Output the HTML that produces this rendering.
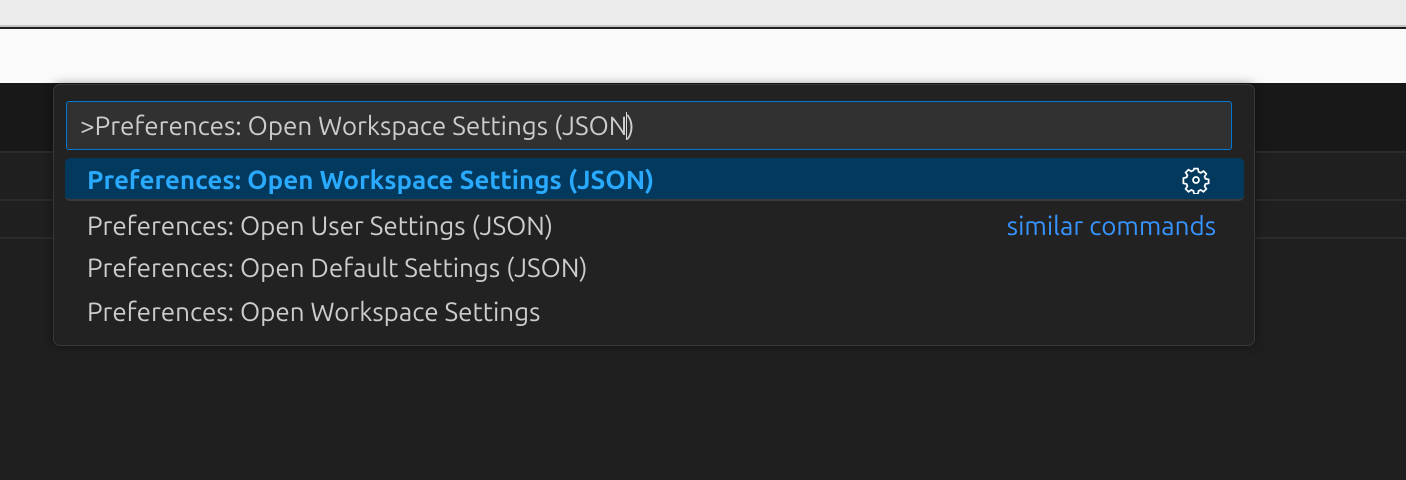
<!DOCTYPE html>
<html><head><meta charset="utf-8"><style>
*{margin:0;padding:0;box-sizing:border-box}
body{width:1406px;height:480px;overflow:hidden;background:#1f1f1f;font-family:"Ubuntu","Liberation Sans",sans-serif;position:relative}
.top{position:absolute;left:0;top:0;width:1406px;height:27px;background:#ebebeb;border-bottom:2px solid #c4c4c4}
.white{position:absolute;left:0;top:29px;width:1406px;height:54px;background:#fafafa}
.dk{position:absolute;left:0;top:83px;width:1406px;height:69px;background:#181818}
.ln{position:absolute;left:0;width:1406px;height:2px;background:#2b2b2b}
.w{position:absolute;left:53px;top:84px;width:1202px;height:262px;background:#222;border:1px solid #383838;border-radius:7px;box-shadow:0 0 10px rgba(0,0,0,.4)}
.inp{position:absolute;left:12px;top:16px;width:1166px;height:49px;background:#313131;border:1px solid #0078d4;border-radius:3px;color:#ccc;font-size:26px;line-height:47px;padding-left:13px}
.cur{display:inline-block;width:1px;height:28px;background:#ddd;vertical-align:-5px;margin:0 -1px}
.row{position:absolute;left:11px;width:1179px;height:43px;font-size:26px;line-height:43px;padding-left:22px;color:#ccc}
.sel{top:73px;background:#04395e;border-radius:5px;color:#2aaaff;font-weight:bold;border-bottom:2px solid #3a3a3a}
.sim{position:absolute;right:28px;top:0;color:#3794ff;font-weight:normal}
.gear{position:absolute;right:34px;top:8px}
</style></head><body>
<div class="top"></div><div class="white"></div><div class="dk"></div>
<div class="ln" style="top:151px"></div><div class="ln" style="top:199px"></div><div class="ln" style="top:237px"></div>
<div class="w">
<div class="inp">&gt;Preferences: Open Workspace Settings (JSON<span class="cur"></span>)</div>
<div class="row sel">Preferences: Open Workspace Settings (JSON)
<svg class="gear" width="28" height="28" viewBox="0 0 16 16"><path fill="none" stroke="#fff" stroke-width="1" d="M6.9 1.5h2.2l.4 1.8 1.2.6 1.6-1 1.6 1.6-1 1.6.5 1.2 1.8.4v2.2l-1.8.4-.5 1.2 1 1.6-1.6 1.6-1.6-1-1.2.5-.4 1.8H6.9l-.4-1.8-1.2-.5-1.6 1-1.6-1.6 1-1.6-.5-1.2-1.8-.4V6.9l1.8-.4.5-1.2-1-1.6 1.6-1.6 1.6 1 1.2-.6z"/><circle cx="8" cy="8" r="1.7" fill="none" stroke="#fff"/></svg></div>
<div class="row" style="top:119px">Preferences: Open User Settings (JSON)<span class="sim">similar commands</span></div>
<div class="row" style="top:161px">Preferences: Open Default Settings (JSON)</div>
<div class="row" style="top:205px">Preferences: Open Workspace Settings</div>
</div>
</body></html>
